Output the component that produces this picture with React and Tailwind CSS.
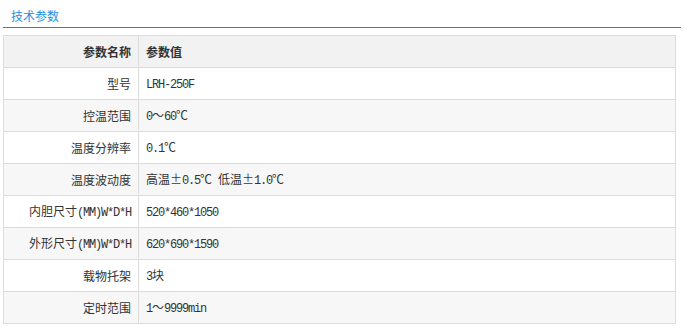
import React from "react";

const rows = [
  ["型号", "LRH-250F"],
  ["控温范围", "0～60℃"],
  ["温度分辨率", "0.1℃"],
  ["温度波动度", "高温±0.5℃ 低温±1.0℃"],
  ["内胆尺寸(MM)W*D*H", "520*460*1050"],
  ["外形尺寸(MM)W*D*H", "620*690*1590"],
  ["载物托架", "3块"],
  ["定时范围", "1～9999min"],
];

function Mixed({ text }) {
  const parts = text.match(/[\x20-\x7e]+|[^\x20-\x7e]+/g) || [];
  return (
    <>
      {parts.map((p, i) =>
        /^[\x20-\x7e]+$/.test(p) ? (
          <span
            key={i}
            className="font-['Liberation_Mono',monospace] tracking-[-1.2px] whitespace-pre"
          >
            {p}
          </span>
        ) : (
          <span key={i}>{p}</span>
        )
      )}
    </>
  );
}

export default function App() {
  return (
    <div className="w-[684px] h-[330px] bg-white font-['Noto_Sans_CJK_SC','Noto_Sans',sans-serif] text-[12px] text-[#333]">
      <div className="mx-[3px] h-[28px] border-b border-[#1c8ad9] pl-[8px] pt-[8px] leading-[16px] text-[#1a8fe3]">
        技术参数
      </div>
      <table className="ml-[3px] mt-[7px] w-[673px] table-fixed border-collapse">
        <colgroup>
          <col className="w-[135px]" />
          <col />
        </colgroup>
        <thead>
          <tr className="bg-[#f2f2f2]">
            <th className="h-[32px] border border-[#dcdcdc] px-[7px] text-right font-bold text-[#333] leading-[16px]">
              参数名称
            </th>
            <th className="h-[32px] border border-[#dcdcdc] px-[7px] text-left font-bold text-[#333] leading-[16px]">
              参数值
            </th>
          </tr>
        </thead>
        <tbody>
          {rows.map(([k, v], i) => (
            <tr key={i} className={i % 2 === 1 ? "bg-[#f7f7f7]" : "bg-white"}>
              <td className="h-[32px] border border-[#dcdcdc] px-[7px] text-right leading-[16px] whitespace-nowrap">
                <Mixed text={k} />
              </td>
              <td className="h-[32px] border border-[#dcdcdc] px-[7px] text-left leading-[16px] whitespace-nowrap">
                <Mixed text={v} />
              </td>
            </tr>
          ))}
        </tbody>
      </table>
    </div>
  );
}
